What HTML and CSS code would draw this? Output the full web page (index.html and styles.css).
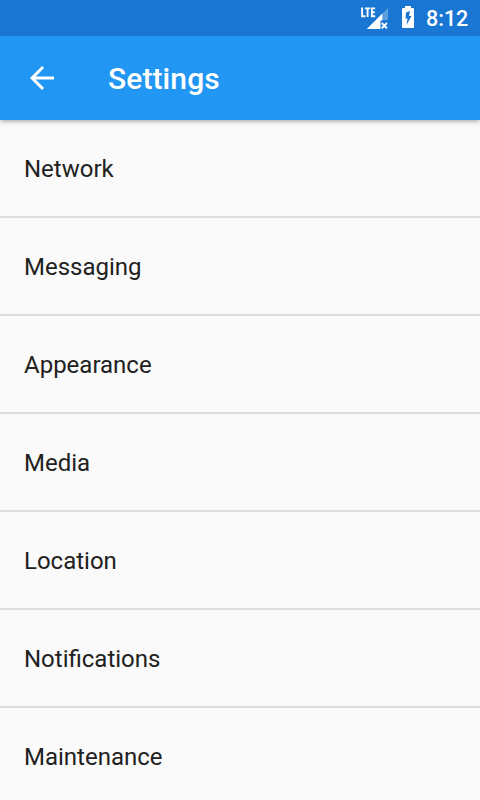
FILE: index.html
```html
<!DOCTYPE html>
<html lang="en">
<head>
<meta charset="utf-8">
<title>Settings</title>
<link rel="stylesheet" href="styles.css">
</head>
<body>
<div class="status-bar">
  <svg class="signal" width="28" height="24" viewBox="0 0 28 24">
    <path d="M28 2V14H22V8Z" fill="#fff" fill-opacity=".3"/>
    <path d="M22.300 7.500V14.500H20.500V23H6.800Z" fill="#fff"/>
    <path d="M2.100 1.500V10.200H5.400M5 2.400H10.200M7.600 2.400V11M15.200 2.400H11.900V10.200H15.200M11.900 6.300H14.800" fill="none" stroke="#fff" stroke-width="1.900"/>
    <path d="M21.700 17l5.300 5.300M27 17l-5.300 5.300" stroke="#fff" stroke-width="1.900"/>
  </svg>
  <svg class="battery" width="12" height="22" viewBox="0 0 12 22">
    <path fill="#fff" fill-rule="evenodd" d="M3 0H9V2H11Q12 2 12 3V21Q12 22 11 22H1Q0 22 0 21V3Q0 2 1 2H3ZM8 5L4 6.500 3.500 12.500H5.500L4.500 19L9.500 10H7Z"/>
  </svg>
  <span class="clock">8:12</span>
</div>
<header class="toolbar">
  <svg class="back" width="24" height="24" viewBox="0 0 24 24">
    <path d="M24 10.500H5.700L14.100 2.100 12 0 0 12 12 24 14.100 21.900 5.700 13.500H24Z" fill="#fff"/>
  </svg>
  <h1 class="title">Settings</h1>
</header>
<ul class="list">
  <li class="row">Network</li>
  <li class="row">Messaging</li>
  <li class="row">Appearance</li>
  <li class="row">Media</li>
  <li class="row">Location</li>
  <li class="row">Notifications</li>
  <li class="row">Maintenance</li>
</ul>
</body>
</html>
```
FILE: styles.css
```css
* { box-sizing: border-box; }
body {
  margin: 0;
  height: 800px;
  overflow: hidden;
  background: #fafafa;
  color: #212121;
  font-family: Roboto, sans-serif;
}
.status-bar {
  position: relative;
  z-index: 2;
  height: 36px;
  padding-right: 12px;
  display: flex;
  justify-content: flex-end;
  align-items: flex-start;
  background: #1976d2;
  color: #fff;
}
.signal { margin: 6px 14px 0 0; }
.battery { margin: 6px 12px 0 0; }
.clock {
  width: 42px;
  font-size: 21.5px;
  font-weight: 500;
  line-height: 38px;
  white-space: nowrap;
}
.toolbar {
  position: relative;
  z-index: 1;
  height: 84px;
  padding-left: 30px;
  display: flex;
  align-items: center;
  background: #2196f3;
  color: #fff;
  box-shadow: 0 1px 5px rgba(0, 0, 0, .38);
}
.title {
  margin: 2px 0 0 54px;
  font-size: 30px;
  font-weight: 500;
  line-height: 36px;
  letter-spacing: .1px;
}
.list {
  margin: 0;
  padding: 0;
  list-style: none;
}
.row {
  height: 98px;
  padding: 0 24px;
  border-bottom: 2px solid #dcdcdc;
  font-size: 24px;
  line-height: 98px;
}
```
